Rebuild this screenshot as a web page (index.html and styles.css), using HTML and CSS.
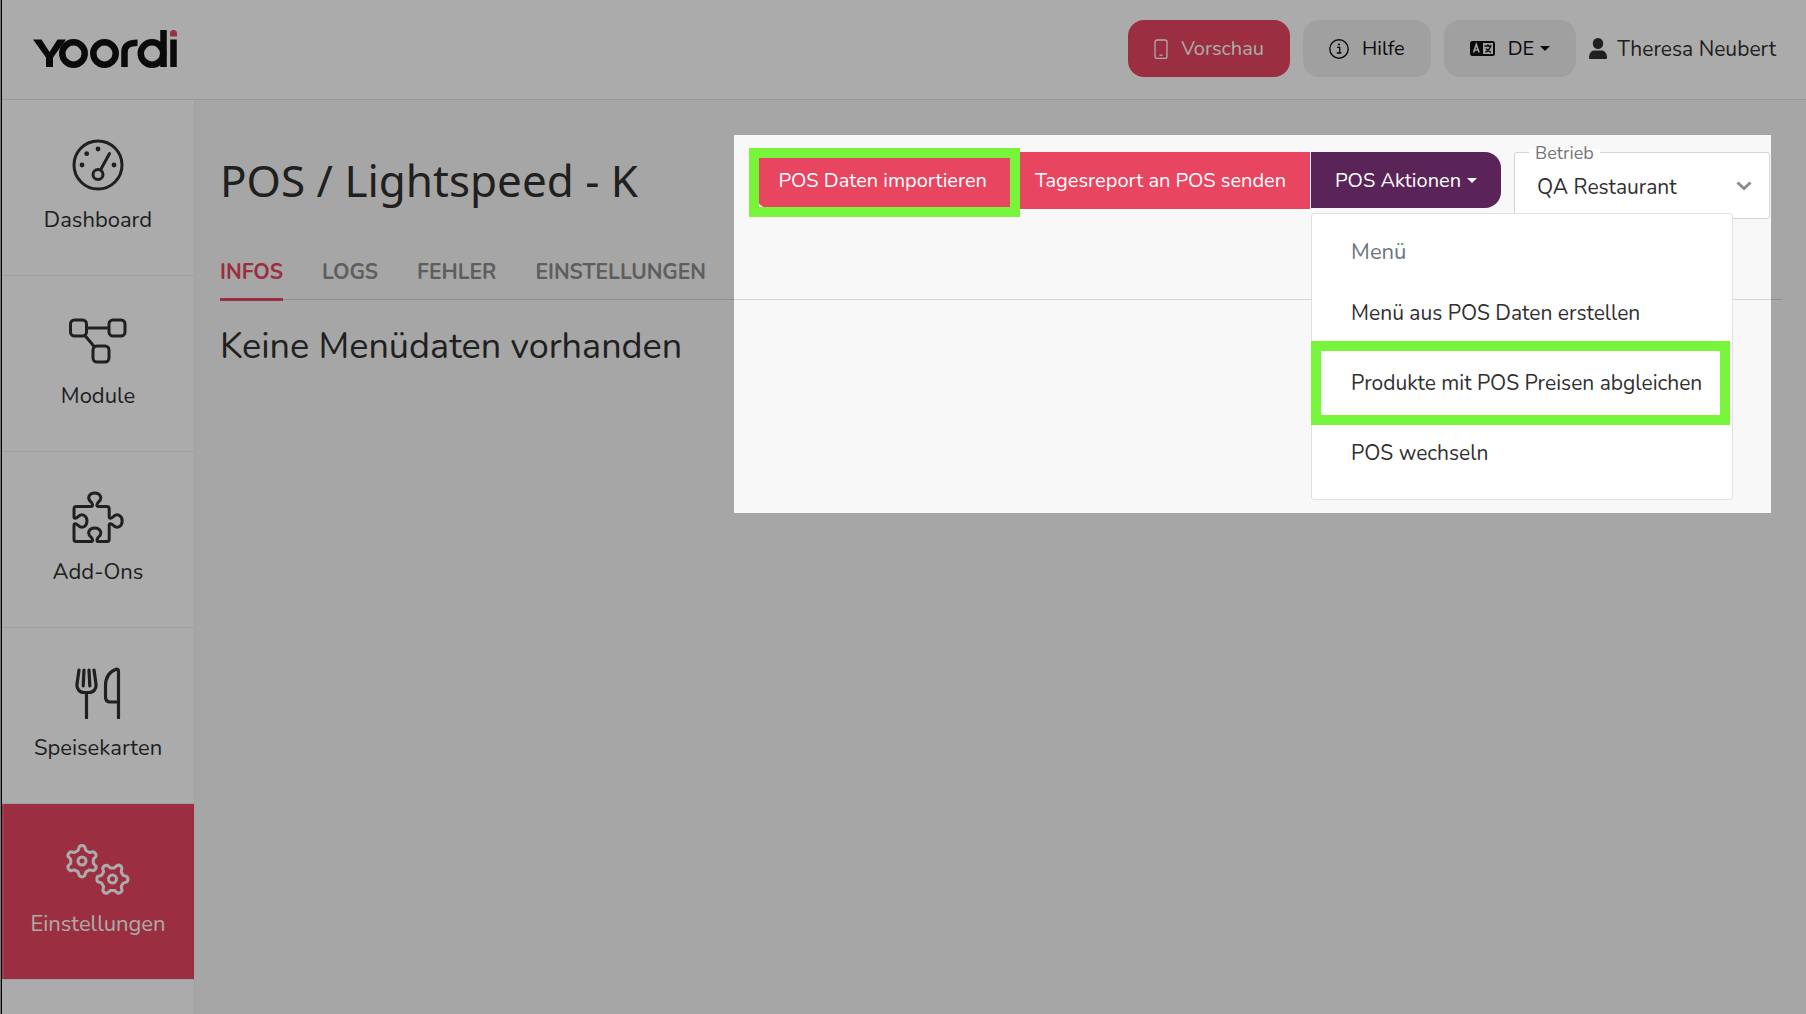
FILE: index.html
```
<!DOCTYPE html>
<html lang="de">
<head>
    <meta charset="utf-8">
    <meta name="viewport" content="width=device-width, initial-scale=1">
    <title>Yoordi - POS</title>
    <link rel="stylesheet" href="styles.css">
</head>
<body>
    <header class="topbar">
        <a href="#" class="logo" aria-label="Yoordi">
            <svg width="146" height="40" viewBox="0 0 146 40" fill="none" stroke="#101010" stroke-width="6.500">
                <path d="M1 10.500h8.500l8 12.500l8-12.500h8.500L21 28.500V38h-7v-9.500z" fill="#101010" stroke="none"/>
                <circle cx="41.500" cy="24.500" r="11.200"/>
                <circle cx="72.500" cy="24.500" r="11.200"/>
                <path d="M92.500 38V23c0-6 4-9.300 13-9.300"/>
                <circle cx="120" cy="24.500" r="11.200"/>
                <path d="M131.500 1v37M141.500 10.500V38"/>
                <path d="M138 7V4.500a3.500 3.500 0 0 1 7 0v3h-7z" fill="#e84560" stroke="none"/>
            </svg>
        </a>
        <nav class="topnav">
            <button class="btn btn-primary" type="button">
                <svg width="14" height="20" viewBox="0 0 14 20" fill="none" stroke="currentColor" stroke-width="1.300"><rect x="1" y="1" width="12" height="18.500" rx="2"/><path d="M5.500 16.200h3"/></svg>
                Vorschau
            </button>
            <button class="btn btn-light" type="button">
                <svg width="20" height="20" viewBox="0 0 20 20"><circle cx="10" cy="10" r="9.200" fill="none" stroke="currentColor" stroke-width="1.400"/><path d="M8 8.300h2.700v5.200M7.800 14h4.600" fill="none" stroke="currentColor" stroke-width="1.300"/><circle cx="10" cy="5.500" r="1.100" fill="currentColor"/></svg>
                Hilfe
            </button>
            <button class="btn btn-light" type="button">
                <svg width="25" height="16" viewBox="0 0 25 16"><rect width="25" height="15" rx="2.500" fill="#101010"/><path d="M13 2h10v11H13z" fill="#efefef"/><path d="M3.500 11.500l2.800-8l2.800 8M4.500 9h3.600" fill="none" stroke="#efefef" stroke-width="1.600"/><path d="M14.500 5h7M18 3.200V5M20.500 5c-.6 3-2.600 5-5 6.200M16 7.500c1 2 2.800 3.200 5 3.700" fill="none" stroke="#101010" stroke-width="1.400"/></svg>
                <span class="caret">DE</span>
            </button>
            <a href="#" class="user">
                <svg width="18" height="22" viewBox="1 0 18 22" fill="currentColor"><ellipse cx="10" cy="5.500" rx="5.200" ry="5.500"/><path d="M1 20c0-5 2.500-7.500 5.500-7.500h7c3 0 5.500 2.500 5.500 7.500q0 1-1 1H2q-1 0-1-1z"/></svg>
                Theresa Neubert
            </a>
        </nav>
    </header>

    <div class="layout">
        <nav class="sidebar">
            <a href="#" class="side-item">
                <svg width="64" height="52" viewBox="0 0 64 52" fill="none" stroke="currentColor" stroke-width="3" stroke-linecap="round"><circle cx="32" cy="26" r="24"/><circle cx="32" cy="35.500" r="5"/><path d="M34.500 31L43.500 14.500"/><g fill="currentColor" stroke="none"><circle cx="16" cy="26" r="2.400"/><circle cx="20.700" cy="14.700" r="2.400"/><circle cx="32" cy="10" r="2.400"/><circle cx="48" cy="26" r="2.400"/></g></svg>
                Dashboard
            </a>
            <a href="#" class="side-item">
                <svg width="64" height="52" viewBox="0 0 64 52" fill="none" stroke="currentColor" stroke-width="3"><rect x="4.500" y="5" width="16" height="16" rx="4"/><rect x="43" y="5" width="16" height="16" rx="4"/><rect x="27" y="31" width="16" height="16" rx="4"/><path d="M20.500 13H43M18.500 20L29 32.500"/></svg>
                Module
            </a>
            <a href="#" class="side-item">
                <svg width="64" height="52" viewBox="0 0 64 52" fill="none" stroke="currentColor" stroke-width="3" stroke-linejoin="round"><path d="M25 15.500c2.500 0 1.500-2.500 .5-4C20 7 23.500 2 28.700 2S37.500 7 32 11.500c-1 1.500-2 4 .5 4h8.300q2.400 0 2.400 2.400v7.600c0 2.500 2.200 2 3.700 .5c4-4.500 9.300-1.500 9.300 4s-5.300 8.500-9.300 4c-1.500-1.500-3.700-2-3.700 .5v13.700q0 2.400-2.400 2.400h-8.300c-2.500 0-1.500-2.500-.5-4c5.500-4.500 2-9.500-3.300-9.500s-8.700 5-3.200 9.500c1 1.500 2 4-.5 4H10.400Q8 50.600 8 48.200V34.500c0-2.500 2.200-2 3.700-.5c4 4.500 9.300 1.500 9.300-4s-5.300-8.500-9.300-4C10.200 27.500 8 28 8 25.500v-7.600q0-2.400 2.400-2.400z"/></svg>
                Add-Ons
            </a>
            <a href="#" class="side-item">
                <svg width="64" height="52" viewBox="0 0 64 52" fill="none" stroke="currentColor" stroke-width="3.200" stroke-linecap="round" stroke-linejoin="round"><path d="M13 3L11 17c-.6 5 2.500 8.500 7 8.500h5c4.500 0 7.600-3.500 7-8.500L28 3M18 3l-.8 16M23 3l.8 16M20.500 26v25"/><path d="M52.500 51V4c0-2-1.500-2.200-3-1.500C43 5 39.500 11 39.500 19v11q0 5 5 5h8"/></svg>
                Speisekarten
            </a>
            <a href="#" class="side-item active">
                <svg width="64" height="52" viewBox="0 0 64 52" fill="none" stroke="currentColor" stroke-width="3" stroke-linejoin="round"><g id="gear"><path d="M13.500 3.500q2.500-2 5 0l1.500 4l3.500 2l4-.8q2.800 1.500 2.600 4.500l-2.800 3v4l2.800 3q.2 3-2.600 4.500l-4-.8l-3.500 2l-1.500 4q-2.500 2-5 0l-1.500-4l-3.500-2l-4 .8q-2.800-1.500-2.600-4.500l2.800-3v-4l-2.800-3q-.2-3 2.600-4.500l4 .8l3.500-2z"/><circle cx="16" cy="18" r="4"/></g><use href="#gear" transform="translate(46.500 36) rotate(30) translate(-16 -18)"/></svg>
                Einstellungen
            </a>
        </nav>

        <main class="content">
            <div class="page-head">
                <h1>POS / Lightspeed - K</h1>
                <div class="toolbar">
                    <div class="btn-group">
                        <button class="btn btn-primary marked" type="button">POS Daten importieren</button>
                        <button class="btn btn-primary" type="button">Tagesreport an POS senden</button>
                        <div class="dropdown">
                            <button class="btn btn-dark caret" type="button" aria-expanded="true">POS Aktionen</button>
                            <div class="dropdown-menu">
                                <h6>Menü</h6>
                                <a href="#">Menü aus POS Daten erstellen</a>
                                <a href="#" class="marked">Produkte mit POS Preisen abgleichen</a>
                                <a href="#">POS wechseln</a>
                            </div>
                        </div>
                    </div>
                    <div class="select-field">
                        <label for="betrieb">Betrieb</label>
                        <select id="betrieb">
                            <option>QA Restaurant</option>
                        </select>
                        <svg width="16" height="10" viewBox="0 0 16 10" fill="none" stroke="#8c8c8c" stroke-width="3"><path d="M1.500 1.500L8 7.500l6.500-6"/></svg>
                    </div>
                    <div class="spotlight"></div>
                </div>
            </div>
            <div class="tabs">
                <a href="#" class="active">INFOS</a>
                <a href="#">LOGS</a>
                <a href="#">FEHLER</a>
                <a href="#">EINSTELLUNGEN</a>
            </div>
            <h2>Keine Menüdaten vorhanden</h2>
        </main>
    </div>
</body>
</html>
```
FILE: styles.css
```
* {
    box-sizing: border-box;
}

html {
    border-left: 1px solid #777;
}

body {
    margin: 0;
    min-height: 100vh;
    display: flex;
    flex-direction: column;
    border-left: 1px solid #000;
    font-family: Nunito, Lato, sans-serif;
    font-size: 21px;
    color: #303030;
    background-color: #f8f8f8;
}

a {
    color: inherit;
    text-decoration: none;
}

/* top bar */
.topbar {
    display: flex;
    align-items: center;
    justify-content: space-between;
    height: 100px;
    padding: 0 30px 2px;
    background-color: #fff;
    border-bottom: 1px solid #e4e4e4;
}

.logo svg {
    display: block;
}

.topnav {
    display: flex;
    align-items: center;
    gap: 13px;
}

.btn {
    display: flex;
    align-items: center;
    gap: 13px;
    height: 57px;
    padding: 0 26px;
    border: none;
    border-radius: 16px;
    font-family: inherit;
    font-size: 20px;
    white-space: nowrap;
    cursor: pointer;
}

.btn-primary {
    background-color: #e84560;
    color: #fff;
}

.btn-light {
    background-color: #efefef;
    color: #101010;
}

.btn-dark {
    background-color: #5b2459;
    color: #fff;
}

.caret {
    display: flex;
    align-items: center;
    gap: 6px;
}

.caret::after {
    content: "";
    border: 5px solid transparent;
    border-top-color: currentColor;
    border-bottom: none;
}

.user {
    display: flex;
    align-items: center;
    gap: 10px;
}

/* layout */
.layout {
    display: flex;
    flex: 1;
}

.sidebar {
    width: 193px;
    flex-shrink: 0;
    background-color: #fff;
    border-right: 1px solid #efefef;
}

.side-item {
    display: flex;
    flex-direction: column;
    align-items: center;
    gap: 14px;
    height: 176px;
    padding-top: 39px;
    border-bottom: 1px solid #efefef;
    font-size: 22px;
    line-height: 30px;
}

.side-item.active {
    background-color: #e84560;
    box-shadow: inset 2px 0 #ea5b73;
    color: #fff;
}

.content {
    flex: 1;
    padding: 52px 24px 0 25px;
}

.page-head {
    display: flex;
    justify-content: space-between;
    height: 96px;
}

h1 {
    margin: 0;
    font-family: "Noto Sans", sans-serif;
    font-size: 44px;
    font-weight: 400;
    line-height: 56px;
}

h2 {
    margin: 25px 0 0;
    font-size: 36px;
    font-weight: 400;
    line-height: 44px;
}

/* actions */
.toolbar {
    position: relative;
    display: flex;
    align-items: flex-start;
    gap: 13px;
    margin-right: 12px;
}

.btn-group {
    display: flex;
}

.btn-group .btn {
    padding: 0 24px;
    border-radius: 0;
}

.btn-group > .btn:first-child {
    border-radius: 16px 0 0 16px;
}

.btn-group .btn-dark {
    height: 56px;
    border-radius: 0 16px 16px 0;
}

.dropdown {
    position: relative;
    margin-left: 1px;
}

.dropdown-menu {
    position: absolute;
    top: 61px;
    left: 0;
    z-index: 2;
    padding: 12px 0 11px;
    background-color: #fff;
    border: 1px solid #e0e0e0;
    border-radius: 3px;
}

.dropdown-menu h6 {
    margin: 0;
    padding: 0 39px;
    font-size: 22px;
    font-weight: 400;
    line-height: 52px;
    color: #6c757d;
}

.dropdown-menu a {
    display: block;
    padding: 0 30px 0 39px;
    line-height: 70px;
    white-space: nowrap;
}

/* green frames around the steps */
.marked {
    position: relative;
}

.marked::after {
    content: "";
    position: absolute;
    inset: -4px -9px -8px -6px;
    border: 10px solid #76f53a;
    z-index: 1;
}

.dropdown-menu .marked::after {
    inset: -7px 2px -7px -1px;
}

.select-field {
    position: relative;
    width: 256px;
}

.select-field label {
    position: absolute;
    top: -11px;
    left: 15px;
    padding: 0 6px;
    font-size: 18px;
    line-height: 24px;
    color: #757575;
    background: linear-gradient(transparent 8px, #fff 8px);
}

.select-field select {
    appearance: none;
    width: 100%;
    height: 67px;
    padding: 2px 22px 0;
    border: 1px solid #d5d5d5;
    border-radius: 3px;
    background-color: #fff;
    font-family: inherit;
    font-size: 21px;
    color: #303030;
}

.select-field svg {
    position: absolute;
    top: 29px;
    right: 18px;
}

/* dims everything outside of the toolbar area */
.spotlight {
    position: absolute;
    top: -17px;
    left: -21px;
    right: -1px;
    height: 378px;
    z-index: 3;
    box-shadow: 0 0 0 2000px rgba(0, 0, 0, 0.33);
    pointer-events: none;
}

/* tabs */
.tabs {
    display: flex;
    gap: 39px;
    height: 52px;
    border-bottom: 1px solid #d5d5d5;
}

.tabs a {
    height: 53px;
    font-weight: 700;
    line-height: 49px;
    color: #8c8c8c;
}

.tabs .active {
    color: #e84560;
    border-bottom: 3px solid #e84560;
}
```
